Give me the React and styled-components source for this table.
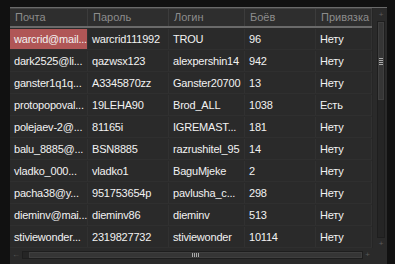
import styled, { createGlobalStyle } from "styled-components";

const Global = createGlobalStyle`
  html, body {
    margin: 0;
    background: #111111;
  }
  body {
    font-family: "Liberation Sans", Arial, sans-serif;
  }
`;

const cols = "78px 81px 76px 71px 56px";

const Frame = styled.div`
  width: 395px;
  height: 264px;
  box-sizing: border-box;
  padding: 7px 8px 0 10px;
  background: #111111;
`;

const Panel = styled.div`
  height: 257px;
  background: #2a2a2a;
  display: grid;
  grid-template-columns: 362px 1fr;
  grid-template-rows: 1fr 16px;
  border-top: 1px solid #6a6a6a;
  box-sizing: border-box;
`;

const Table = styled.div`
  overflow: hidden;
`;

const HeaderRow = styled.div`
  display: grid;
  grid-template-columns: ${cols};
  height: 17px;
  background: #2e2e2e;
  border-bottom: 2px solid #6a6a6a;
  border-top: 1px solid #444;
`;

const HeadCell = styled.div`
  font-size: 11px;
  line-height: 17px;
  color: #8c8c8c;
  padding-left: 5px;
  border-right: 1px solid #3c3c3c;
  white-space: nowrap;
  overflow: hidden;
`;

const Row = styled.div`
  display: grid;
  grid-template-columns: ${cols};
  height: 22px;
  border-bottom: 1px solid #2f2f2f;
  box-sizing: border-box;
`;

const Cell = styled.div`
  font-size: 11px;
  line-height: 20px;
  letter-spacing: -0.2px;
  color: #f2f2f2;
  padding-left: 4px;
  margin-top: 1px;
  background: ${(p) => (p.$active ? "#b05656" : "transparent")};
  border-right: 1px solid #313131;
  white-space: nowrap;
`;

const VBar = styled.div`
  display: flex;
  flex-direction: column;
  align-items: center;
  padding: 3px 2px 0 4px;
  border-left: 1px solid #262626;
`;

const Arrow = styled.div`
  font-size: 8px;
  line-height: 8px;
  color: #5a5a5a;
  height: 8px;
`;

const VTrack = styled.div`
  flex: 1;
  width: 6px;
  margin: 2px 0;
  background: #252525;
  border: 1px solid #1e1e1e;
  display: flex;
  flex-direction: column;
`;

const VThumb = styled.div`
  height: 76px;
  background: #353535;
  border: 1px solid #3f3f3f;
  display: flex;
  align-items: center;
  justify-content: center;
`;

const Grip = styled.div`
  width: ${(p) => (p.$h ? "7px" : "4px")};
  height: ${(p) => (p.$h ? "4px" : "7px")};
  background: ${(p) =>
    p.$h
      ? "repeating-linear-gradient(90deg, #aaa 0 1px, transparent 1px 2px)"
      : "repeating-linear-gradient(180deg, #aaa 0 1px, transparent 1px 2px)"};
`;

const HBar = styled.div`
  display: flex;
  align-items: center;
  padding: 0 2px 3px 2px;
  gap: 2px;
`;

const HTrack = styled.div`
  flex: 1;
  height: 6px;
  background: #252525;
  border: 1px solid #1e1e1e;
  display: flex;
`;

const HThumb = styled.div`
  flex: 1;
  margin-left: 6px;
  background: #353535;
  border: 1px solid #3f3f3f;
  display: flex;
  align-items: center;
  justify-content: center;
`;

const Corner = styled.div``;

const headers = ["Почта", "Пароль", "Логин", "Боёв", "Привязка"];

const rows = [
  ["warcrid@mail...", "warcrid111992", "TROU", "96", "Нету"],
  ["dark2525@li...", "qazwsx123", "alexpershin14", "942", "Нету"],
  ["ganster1q1q...", "A3345870zz", "Ganster20700", "13", "Нету"],
  ["protopopoval...", "19LEHA90", "Brod_ALL", "1038", "Есть"],
  ["polejaev-2@...", "81165i", "IGREMAST...", "181", "Нету"],
  ["balu_8885@...", "BSN8885", "razrushitel_95", "14", "Нету"],
  ["vladko_000...", "vladko1", "BaguMjeke", "2", "Нету"],
  ["pacha38@y...", "951753654p", "pavlusha_c...", "298", "Нету"],
  ["dieminv@mai...", "dieminv86", "dieminv", "513", "Нету"],
  ["stiviewonder...", "2319827732", "stiviewonder", "10114", "Нету"],
];

export default function App() {
  return (
    <>
      <Global />
      <Frame>
        <Panel>
          <Table>
            <HeaderRow>
              {headers.map((h) => (
                <HeadCell key={h}>{h}</HeadCell>
              ))}
            </HeaderRow>
            {rows.map((r, i) => (
              <Row key={i}>
                {r.map((c, j) => (
                  <Cell key={j} $active={i === 0 && j === 0}>
                    {c}
                  </Cell>
                ))}
              </Row>
            ))}
          </Table>
          <VBar>
            <Arrow>+</Arrow>
            <VTrack>
              <VThumb>
                <Grip />
              </VThumb>
            </VTrack>
            <Arrow>+</Arrow>
          </VBar>
          <HBar>
            <Arrow>←</Arrow>
            <HTrack>
              <HThumb>
                <Grip $h />
              </HThumb>
            </HTrack>
            <Arrow>+</Arrow>
          </HBar>
          <Corner />
        </Panel>
      </Frame>
    </>
  );
}
